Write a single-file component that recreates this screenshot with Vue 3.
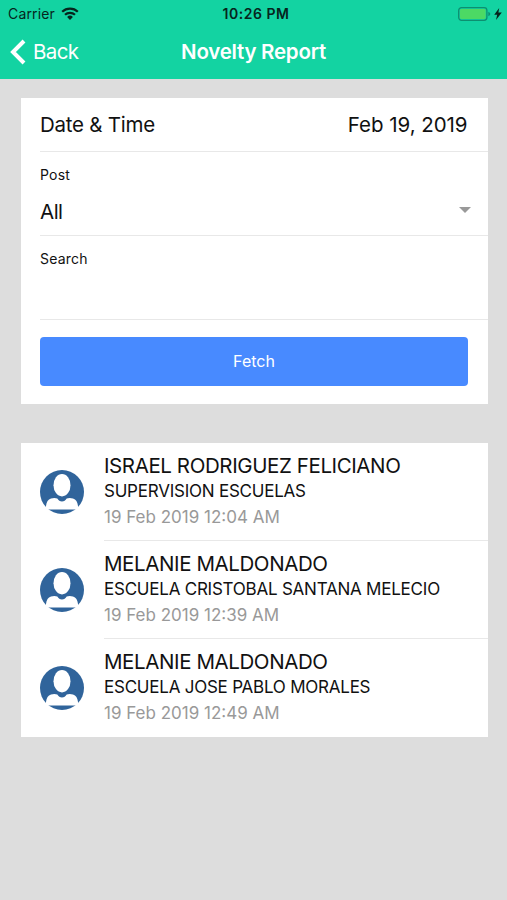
<template>
  <div class="page">
    <header class="header">
      <div class="status-bar">
        <div class="status-left">
          <span class="carrier">Carrier</span>
          <svg class="wifi" viewBox="0 0 18 13">
            <path d="M1.2 4.7a11.2 11.2 0 0 1 15.6 0" />
            <path d="M4 7.8a7.2 7.2 0 0 1 10 0" />
            <path class="wifi-dot" d="M9 12.9L6.1 9.9a4.2 4.2 0 0 1 5.8 0z" />
          </svg>
        </div>
        <span class="clock">10:26 PM</span>
        <div class="status-right">
          <svg class="battery" viewBox="0 0 33 14">
            <rect class="battery-body" x="0.7" y="0.7" width="28.2" height="12.6" rx="2.8" />
            <rect class="battery-level" x="2" y="2" width="25.6" height="10" rx="1.4" />
            <path class="battery-tip" d="M30.3 4.8q2 .7 2 2.2t-2 2.2z" />
          </svg>
          <svg class="bolt" viewBox="0 0 8 12">
            <path d="M5.2 0L0.2 6.8h3L2 12l5.8-7.4H4.4z" />
          </svg>
        </div>
      </div>

      <div class="toolbar">
        <button class="back-button">
          <svg class="chevron" viewBox="0 0 16 26">
            <path d="M14 2L3 13l11 11" />
          </svg>
          <span class="back-label">Back</span>
        </button>
        <h1 class="title">Novelty Report</h1>
      </div>
    </header>

    <main class="content">
      <section class="card form">
        <div class="row date-row">
          <span class="date-label">Date &amp; Time</span>
          <span class="date-value">{{ date }}</span>
        </div>
        <div class="row field">
          <span class="label">Post</span>
          <div class="select">
            <span class="select-value">{{ post }}</span>
            <span class="caret"></span>
          </div>
        </div>
        <div class="row field">
          <label class="label" for="search">Search</label>
          <input id="search" v-model="search" type="text" class="search-input">
        </div>
        <button class="fetch-button">Fetch</button>
      </section>

      <section class="card">
        <div v-for="report in reports" :key="report.time" class="item">
          <svg class="avatar" viewBox="0 0 44 44">
            <circle cx="22" cy="22" r="22" />
            <ellipse class="person" cx="22" cy="15.2" rx="8.5" ry="11.2" />
            <path
              class="person"
              d="M6 39.500V36c.5-4 2-6.500 5-7.400 2.500-.8 4.500-.7 6.300 0 1.200 1.800 2.700 3 4.700 3s3.500-1.200 4.700-3c1.800-.7 3.800-.8 6.300 0 3 .9 4.500 3.400 5 7.400v3.500z"
            />
          </svg>
          <div class="item-body">
            <h2 class="name">{{ report.name }}</h2>
            <p class="place">{{ report.place }}</p>
            <p class="time">{{ report.time }}</p>
          </div>
        </div>
      </section>
    </main>
  </div>
</template>

<script setup>
import { ref } from 'vue';

const date = ref('Feb 19, 2019');
const post = ref('All');
const search = ref('');

const reports = ref([
  {
    name: 'ISRAEL RODRIGUEZ FELICIANO',
    place: 'SUPERVISION ESCUELAS',
    time: '19 Feb 2019 12:04 AM'
  },
  {
    name: 'MELANIE MALDONADO',
    place: 'ESCUELA CRISTOBAL SANTANA MELECIO',
    time: '19 Feb 2019 12:39 AM'
  },
  {
    name: 'MELANIE MALDONADO',
    place: 'ESCUELA JOSE PABLO MORALES',
    time: '19 Feb 2019 12:49 AM'
  }
]);
</script>

<style>
body {
  background: #dddddd;
}
</style>

<style scoped>
.page {
  min-height: 900px;
  background: #dddddd;
  color: #111;
  font-family: Inter, "Liberation Sans", sans-serif;
}

.header {
  height: 79px;
  background: #13d3a2;
}

.status-bar {
  display: grid;
  grid-template-columns: 1fr auto 1fr;
  align-items: center;
  height: 27px;
  padding: 0 5px 0 8px;
  color: #06251d;
}

.status-left,
.status-right {
  display: flex;
  align-items: center;
}

.status-left {
  gap: 6px;
}

.status-right {
  justify-content: flex-end;
  gap: 3px;
}

.carrier {
  font-size: 14px;
  letter-spacing: 0.15px;
}

.wifi {
  width: 18px;
  height: 13px;
  fill: none;
  stroke: #06251d;
  stroke-width: 2.2;
}

.wifi .wifi-dot {
  fill: #06251d;
  stroke: none;
}

.clock {
  padding-left: 2px;
  font-size: 14px;
  font-weight: 600;
  letter-spacing: 0.5px;
}

.battery {
  width: 33px;
  height: 14px;
}

.battery-body {
  fill: none;
  stroke: #0d8f70;
  stroke-width: 1.3;
}

.battery-level {
  fill: #4cd964;
}

.battery-tip {
  fill: #0d8f70;
}

.bolt {
  width: 8px;
  height: 12px;
  fill: #06251d;
}

.toolbar {
  display: grid;
  grid-template-columns: 1fr auto 1fr;
  align-items: center;
  height: 50px;
  padding: 0 10px;
  color: #fff;
}

.back-button {
  display: flex;
  align-items: center;
  gap: 7px;
  padding: 0;
  border: none;
  background: none;
  color: #fff;
  font-family: inherit;
}

.chevron {
  width: 16px;
  height: 26px;
  fill: none;
  stroke: #fff;
  stroke-width: 4;
}

.back-label {
  padding-bottom: 2px;
  font-size: 20.5px;
  letter-spacing: -0.6px;
}

.title {
  margin: 0;
  padding-bottom: 2px;
  font-size: 20.5px;
  font-weight: 600;
  letter-spacing: -0.25px;
}

.content {
  display: flex;
  flex-direction: column;
  gap: 39px;
  padding: 19px 19.5px 0 20.5px;
}

.card {
  background: #fff;
}

.form {
  height: 306px;
}

.row {
  box-sizing: border-box;
  margin-left: 19.5px;
  border-bottom: 1px solid #e8e8e8;
}

.date-row {
  display: flex;
  align-items: center;
  justify-content: space-between;
  height: 54px;
  padding-right: 20px;
  font-size: 20.5px;
}

.date-label {
  letter-spacing: -0.25px;
}

.date-value {
  letter-spacing: -0.05px;
}

.field {
  display: flex;
  flex-direction: column;
  height: 84px;
  padding: 14px 16.5px 0 0;
}

.label {
  font-size: 14px;
  line-height: 18px;
  letter-spacing: 0.2px;
}

.select {
  display: flex;
  align-items: center;
  justify-content: space-between;
  height: 28px;
  margin-top: 14px;
}

.select-value {
  padding-bottom: 2px;
  font-size: 20.5px;
  letter-spacing: -0.5px;
}

.caret {
  width: 0;
  height: 0;
  margin-top: -4px;
  border: 6px solid transparent;
  border-top-color: #999;
  border-bottom: 0;
}

.search-input {
  height: 28px;
  margin-top: 12px;
  padding: 0;
  border: none;
  outline: none;
  background: none;
  font: inherit;
}

.fetch-button {
  display: block;
  width: 428px;
  height: 49px;
  margin: 17px 0 0 19.5px;
  padding: 0 0 1px;
  border: none;
  border-radius: 4px;
  background: #488aff;
  color: #fff;
  font-family: inherit;
  font-size: 16px;
}

.item {
  display: flex;
  gap: 20px;
  height: 98px;
  padding-left: 19.5px;
}

.avatar {
  flex: none;
  width: 44px;
  height: 44px;
  margin-top: 27px;
  fill: #30649b;
}

.person {
  fill: #fff;
}

.item-body {
  box-sizing: border-box;
  flex: 1;
  padding-top: 10px;
  border-bottom: 1px solid #e8e8e8;
  white-space: nowrap;
}

.item:last-child .item-body {
  border-bottom: none;
}

.name,
.place,
.time {
  margin: 0;
  font-weight: 400;
}

.name {
  font-size: 20.5px;
  line-height: 25px;
  letter-spacing: -0.4px;
}

.place {
  font-size: 17px;
  line-height: 26px;
  letter-spacing: -0.23px;
}

.time {
  color: #999;
  font-size: 17px;
  line-height: 26px;
}
</style>
